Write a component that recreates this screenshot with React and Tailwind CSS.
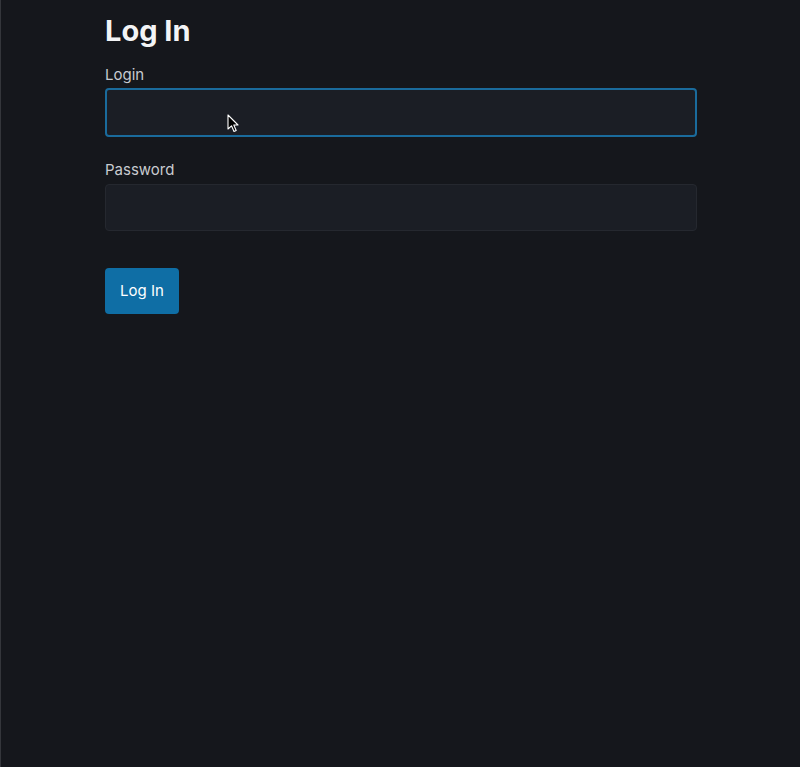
export default function App() {
  return (
    <div className="min-h-[767px] w-full bg-[#15171c] border-l border-[#34363b]" style={{ fontFamily: "Inter, 'Noto Sans', sans-serif" }}>
      <div className="ml-[104px] w-[592px] pt-[13px]">
        <h1 className="text-[29px] leading-[35px] font-bold text-[#f3f4f6]">Log In</h1>
        <form className="mt-[17px]" onSubmit={(e) => e.preventDefault()}>
          <label className="block text-[15px] leading-[20px] text-[#c8cbd0]">Login</label>
          <div className="relative mt-[3px]">
            <input type="text" className="block w-full h-[49px] rounded-[4px] border-2 border-[#1a6b9c] bg-[#1b1e25] px-3 text-[#e5e7eb] outline-none" />
            <svg className="pointer-events-none absolute left-[122px] top-[26px]" width="12" height="19" viewBox="0 0 12 19">
              <path d="M1 1 L1 15 L4.5 11.8 L7 17.5 L9.2 16.5 L6.8 11 L11 11 Z" fill="#000" stroke="#fff" strokeWidth="1.1" strokeLinejoin="round" />
            </svg>
          </div>
          <label className="mt-[23px] block text-[15px] leading-[20px] text-[#c8cbd0]">Password</label>
          <input type="password" className="mt-[4px] block w-full h-[47px] rounded-[4px] border border-[#25282f] bg-[#1b1e25] px-3 text-[#e5e7eb] outline-none" />
          <button type="submit" className="mt-[37px] block h-[46px] w-[74px] rounded-[4px] bg-[#0f6ea5] text-[15px] text-white">Log In</button>
        </form>
      </div>
    </div>
  );
}
